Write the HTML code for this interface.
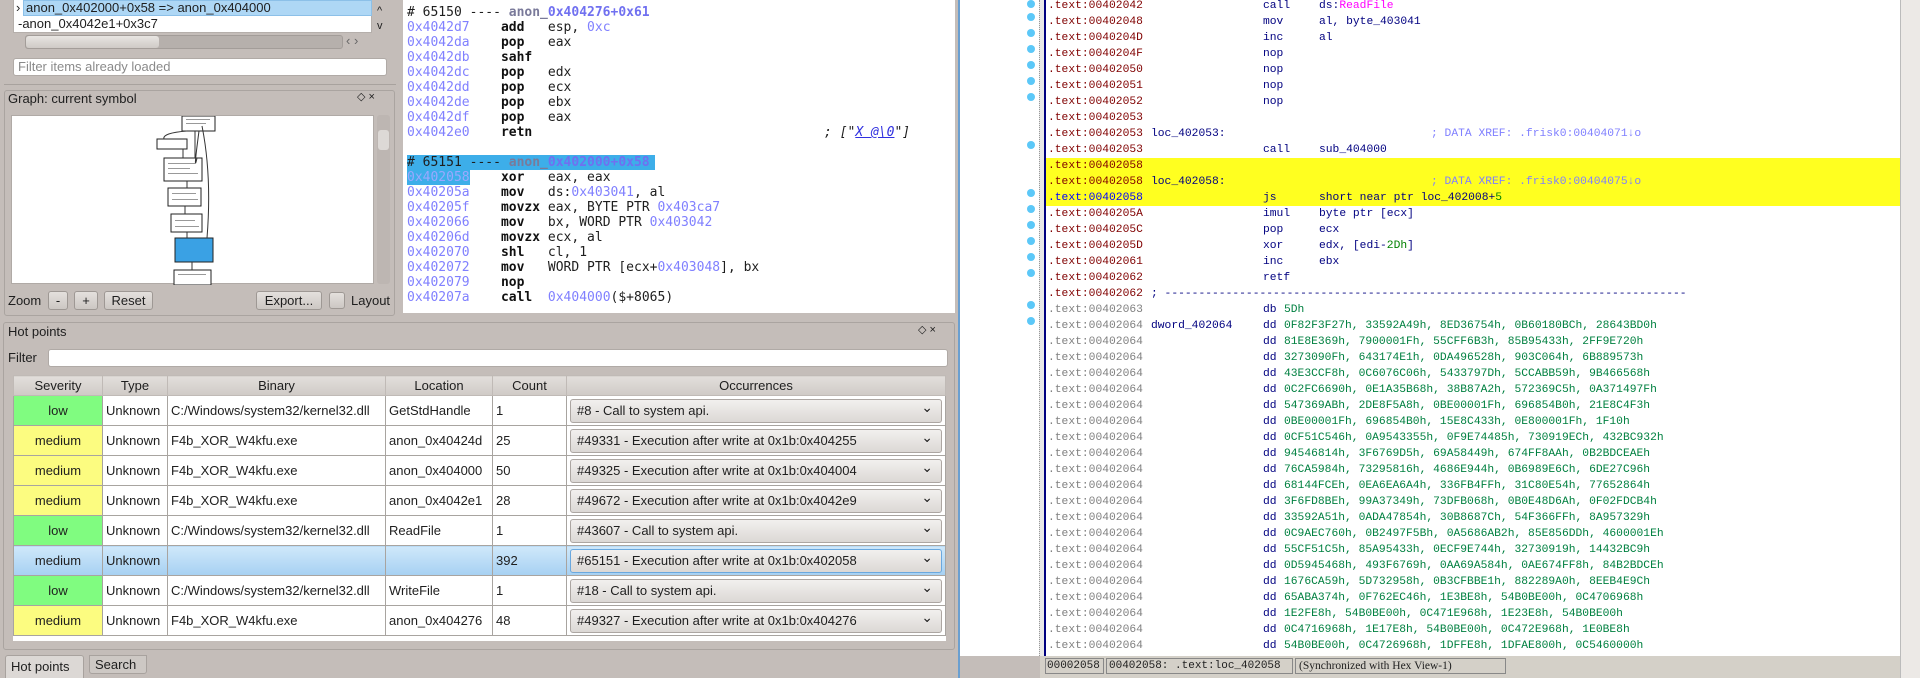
<!DOCTYPE html>
<html><head><meta charset="utf-8"><style>
*{margin:0;padding:0;box-sizing:border-box}
body{width:1920px;height:678px;overflow:hidden;background:#c4bdb9;font-family:"Liberation Sans","DejaVu Sans",sans-serif;font-size:13px;color:#1e1e1e;position:relative}
.a{position:absolute}
.w{background:#fff}
.btn{position:absolute;height:19px;border:1px solid #9e9894;border-radius:3px;background:linear-gradient(#e4e0dd,#ccc7c3);text-align:center;line-height:17px;font-size:13px}
.code{position:absolute;left:403px;top:0;width:552px;height:313px;background:#fff;font-family:"DejaVu Sans Mono","Liberation Mono",monospace;font-size:13px;overflow:hidden}
.code div{position:absolute;height:15px;line-height:15px;white-space:pre}
.ad{color:#8080ff}
.mn{font-weight:bold;color:#111}
.ida{position:absolute;left:960px;top:0;width:940px;height:656px;background:#fff;overflow:hidden;font-family:"Liberation Mono","DejaVu Sans Mono",monospace;font-size:11.3px}
.r{position:absolute;left:0;width:940px;height:16px;line-height:16px;white-space:pre}
.r span{position:absolute}
.t{left:88px;color:#800000}
.g{left:88px;color:#808080}
.lb{left:191px;color:#000080}
.m{left:303px;color:#000080}
.o{left:359px;color:#000080}
.d{left:324px;color:#008040}
.c{left:471px;color:#8080ff}
.dot{position:absolute;left:67px;width:8px;height:8px;border-radius:4px;background:#5cc8f8}
table{border-collapse:collapse;position:absolute;left:13px;top:375px;width:933px;table-layout:fixed;background:#fff}
td,th{border:1px solid #a8a4a0;height:30px;font-weight:normal;white-space:nowrap;overflow:hidden;padding:0 3px;font-size:13px}
th{height:20px;background:linear-gradient(#e2dedb,#cfcac6);border-color:#c0bab6}
.lo{background:#80fc80;text-align:center}
.me{background:#fcfc80;text-align:center}
.sel td{background:linear-gradient(#cfe8fa,#a6d0f2)}
.cb{height:24px;border:1px solid #aca6a2;border-radius:3px;background:linear-gradient(#f2f0ee,#dcd8d5);line-height:22px;padding-left:6px;position:relative}
.cb:after{content:"⌄";position:absolute;right:8px;top:-4px;font-size:14px}
</style></head><body>

<!-- top-left tree -->
<div class="a w" style="left:13px;top:0;width:359px;height:33px;border:1px solid #b5afab;border-top:none"></div>
<div class="a" style="left:23px;top:0;width:349px;height:16px;background:#aed7f5;border:1px solid #8cc0e8"></div>
<div class="a" style="left:16px;top:0;line-height:16px">›</div>
<div class="a" style="left:26px;top:0;line-height:16px">anon_0x402000+0x58 =&gt; anon_0x404000</div>
<div class="a" style="left:18px;top:16px;line-height:15px">-anon_0x4042e1+0x3c7</div>
<div class="a" style="left:377px;top:5px;font-size:11px">^</div>
<div class="a" style="left:377px;top:20px;font-size:11px">v</div>
<div class="a" style="left:25px;top:35px;width:318px;height:14px;background:#b6b0ac;border-radius:3px;border:1px solid #a39d99"></div>
<div class="a" style="left:26px;top:36px;width:133px;height:12px;background:linear-gradient(#e8e5e2,#cfcac6);border-radius:3px"></div>
<div class="a" style="left:346px;top:33px;color:#666">‹ ›</div>
<div class="a w" style="left:13px;top:58px;width:374px;height:18px;border:1px solid #b0aaa6;border-radius:3px;color:#8a8a8a;padding-left:4px;line-height:16px">Filter items already loaded</div>
<div class="a" style="left:4px;top:84px;width:392px;height:1px;background:#a8a29e"></div>

<!-- graph dock -->
<div class="a" style="left:4px;top:90px;width:391px;height:226px;border:1px solid #aaa4a0;border-radius:3px"></div>
<div class="a" style="left:8px;top:91px;font-size:13px">Graph: current symbol</div>
<div class="a" style="left:357px;top:90px;font-size:11px">◇ ×</div>
<div class="a w" style="left:11px;top:115px;width:363px;height:169px;border:1px solid #b0aaa6">
 <svg width="363" height="169" style="position:absolute;left:0;top:0">
  <g fill="#fff" stroke="#222" stroke-width="1">
   <rect x="170" y="0" width="33" height="15"/>
   <rect x="145" y="23" width="30" height="10"/>
   <rect x="152" y="42" width="38" height="23"/>
   <rect x="156" y="72" width="33" height="18"/>
   <rect x="159" y="98" width="31" height="18"/>
   <rect x="163" y="122" width="38" height="24" fill="#3aa1e4"/>
   <rect x="162" y="154" width="37" height="15"/>
  </g>
  <g fill="none" stroke="#333">
   <path d="M183 15 L183 42 M171 33 L171 42 M175 65 L175 72 M173 90 L173 98 M175 116 L175 122 M180 146 L180 154 M190 10 Q200 60 195 122 M187 15 Q181 60 185 42 M175 15 Q150 17 152 23"/>
  </g>
  <g fill="#999"><rect x="174" y="3" width="24" height="1"/><rect x="174" y="7" width="20" height="1"/><rect x="156" y="47" width="28" height="1"/><rect x="156" y="52" width="22" height="1"/><rect x="156" y="57" width="30" height="1"/><rect x="160" y="77" width="24" height="1"/><rect x="160" y="83" width="26" height="1"/><rect x="163" y="104" width="20" height="1"/><rect x="163" y="110" width="24" height="1"/><rect x="166" y="158" width="28" height="1"/></g>
 </svg>
</div>
<div class="a" style="left:377px;top:115px;width:13px;height:169px;background:#bdb6b2;border-radius:3px"></div>
<div class="a" style="left:378px;top:130px;width:11px;height:20px;background:#ddd9d6;border-radius:3px"></div>
<div class="a" style="left:8px;top:292px;line-height:17px">Zoom</div>
<div class="btn" style="left:48px;top:291px;width:20px">-</div>
<div class="btn" style="left:74px;top:291px;width:24px">+</div>
<div class="btn" style="left:104px;top:291px;width:49px">Reset</div>
<div class="btn" style="left:256px;top:291px;width:66px">Export...</div>
<div class="btn" style="left:329px;top:292px;width:16px;height:17px"></div>
<div class="a" style="left:351px;top:292px;line-height:17px">Layout</div>

<!-- code panel -->
<div class="code">
 <div style="left:4px;top:5px"># 65150 ---- <b style="color:#7a7a9a">anon_</b><b style="color:#7070f0">0x404276+0x61</b></div>
 <div style="left:4px;top:20px"><span class="ad">0x4042d7</span>    <span class="mn">add</span>   esp, <span class="ad">0xc</span></div>
 <div style="left:4px;top:35px"><span class="ad">0x4042da</span>    <span class="mn">pop</span>   eax</div>
 <div style="left:4px;top:50px"><span class="ad">0x4042db</span>    <span class="mn">sahf</span></div>
 <div style="left:4px;top:65px"><span class="ad">0x4042dc</span>    <span class="mn">pop</span>   edx</div>
 <div style="left:4px;top:80px"><span class="ad">0x4042dd</span>    <span class="mn">pop</span>   ecx</div>
 <div style="left:4px;top:95px"><span class="ad">0x4042de</span>    <span class="mn">pop</span>   ebx</div>
 <div style="left:4px;top:110px"><span class="ad">0x4042df</span>    <span class="mn">pop</span>   eax</div>
 <div style="left:4px;top:125px"><span class="ad">0x4042e0</span>    <span class="mn">retn</span></div>
 <div style="left:421px;top:125px;font-style:italic">; ["<span style="color:#3030e0;text-decoration:underline">X @\0</span>"]</div>
 <div style="left:4px;top:155px;background:#3daee9;width:248px"># 65151 ---- <b style="color:#7a7a9a">anon_</b><b style="color:#7070f0">0x402000+0x58</b></div>
 <div style="left:4px;top:170px"><span style="background:#3daee9;color:#9aa8ff">0x402058</span>    <span class="mn">xor</span>   eax, eax</div>
 <div style="left:4px;top:185px"><span class="ad">0x40205a</span>    <span class="mn">mov</span>   ds:<span class="ad">0x403041</span>, al</div>
 <div style="left:4px;top:200px"><span class="ad">0x40205f</span>    <span class="mn">movzx</span> eax, BYTE PTR <span class="ad">0x403ca7</span></div>
 <div style="left:4px;top:215px"><span class="ad">0x402066</span>    <span class="mn">mov</span>   bx, WORD PTR <span class="ad">0x403042</span></div>
 <div style="left:4px;top:230px"><span class="ad">0x40206d</span>    <span class="mn">movzx</span> ecx, al</div>
 <div style="left:4px;top:245px"><span class="ad">0x402070</span>    <span class="mn">shl</span>   cl, 1</div>
 <div style="left:4px;top:260px"><span class="ad">0x402072</span>    <span class="mn">mov</span>   WORD PTR [ecx+<span class="ad">0x403048</span>], bx</div>
 <div style="left:4px;top:275px"><span class="ad">0x402079</span>    <span class="mn">nop</span></div>
 <div style="left:4px;top:290px"><span class="ad">0x40207a</span>    <span class="mn">call</span>  <span class="ad">0x404000</span>($+8065)</div>
</div>

<!-- hot points dock -->
<div class="a" style="left:3px;top:322px;width:952px;height:328px;border:1px solid #aaa4a0;border-radius:3px"></div>
<div class="a" style="left:8px;top:324px;line-height:15px">Hot points</div>
<div class="a" style="left:918px;top:323px;font-size:11px">◇ ×</div>
<div class="a" style="left:8px;top:350px;line-height:15px">Filter</div>
<div class="a w" style="left:48px;top:349px;width:900px;height:18px;border:1px solid #b0aaa6;border-radius:3px"></div>
<div class="a w" style="left:13px;top:375px;width:933px;height:266px"></div>
<table>
<colgroup><col style="width:89px"><col style="width:65px"><col style="width:218px"><col style="width:107px"><col style="width:74px"><col></colgroup>
<tr><th>Severity</th><th>Type</th><th>Binary</th><th>Location</th><th>Count</th><th>Occurrences</th></tr>
<tr><td class="lo">low</td><td>Unknown</td><td>C:/Windows/system32/kernel32.dll</td><td>GetStdHandle</td><td>1</td><td><div class="cb">#8 - Call to system api.</div></td></tr>
<tr><td class="me">medium</td><td>Unknown</td><td>F4b_XOR_W4kfu.exe</td><td>anon_0x40424d</td><td>25</td><td><div class="cb">#49331 - Execution after write at 0x1b:0x404255</div></td></tr>
<tr><td class="me">medium</td><td>Unknown</td><td>F4b_XOR_W4kfu.exe</td><td>anon_0x404000</td><td>50</td><td><div class="cb">#49325 - Execution after write at 0x1b:0x404004</div></td></tr>
<tr><td class="me">medium</td><td>Unknown</td><td>F4b_XOR_W4kfu.exe</td><td>anon_0x4042e1</td><td>28</td><td><div class="cb">#49672 - Execution after write at 0x1b:0x4042e9</div></td></tr>
<tr><td class="lo">low</td><td>Unknown</td><td>C:/Windows/system32/kernel32.dll</td><td>ReadFile</td><td>1</td><td><div class="cb">#43607 - Call to system api.</div></td></tr>
<tr class="sel"><td style="text-align:center">medium</td><td>Unknown</td><td></td><td></td><td>392</td><td><div class="cb" style="border-color:#6aa8de">#65151 - Execution after write at 0x1b:0x402058</div></td></tr>
<tr><td class="lo">low</td><td>Unknown</td><td>C:/Windows/system32/kernel32.dll</td><td>WriteFile</td><td>1</td><td><div class="cb">#18 - Call to system api.</div></td></tr>
<tr><td class="me">medium</td><td>Unknown</td><td>F4b_XOR_W4kfu.exe</td><td>anon_0x404276</td><td>48</td><td><div class="cb">#49327 - Execution after write at 0x1b:0x404276</div></td></tr>
</table>
<!-- tabs -->
<div class="a" style="left:5px;top:655px;width:79px;height:23px;background:#dcd8d5;border:1px solid #a8a29e;border-bottom:none;border-radius:3px 3px 0 0;line-height:22px;padding-left:5px">Hot points</div>
<div class="a" style="left:89px;top:655px;width:58px;height:19px;background:#cdc8c4;border:1px solid #a8a29e;border-radius:0 0 3px 3px;line-height:17px;padding-left:5px">Search</div>

<!-- divider -->
<div class="a" style="left:958px;top:0;width:2px;height:678px;background:#6a9fd0"></div>

<!-- IDA view -->
<div class="ida">
 <div class="a" style="left:79px;top:0;width:5px;height:656px;background:#e8e8e8;border-left:1px dotted #999"></div>
 <div class="a" style="left:84px;top:0;width:2px;height:656px;background:#000080"></div>
 <div class="a" style="left:86px;top:158px;width:854px;height:48px;background:#ffff20"></div>
 <div class="dot" style="top:0px"></div><div class="dot" style="top:13px"></div><div class="dot" style="top:29px"></div><div class="dot" style="top:45px"></div><div class="dot" style="top:61px"></div><div class="dot" style="top:77px"></div><div class="dot" style="top:93px"></div><div class="dot" style="top:141px"></div><div class="dot" style="top:189px"></div><div class="dot" style="top:205px"></div><div class="dot" style="top:221px"></div><div class="dot" style="top:237px"></div><div class="dot" style="top:253px"></div><div class="dot" style="top:269px"></div><div class="dot" style="top:301px"></div><div class="dot" style="top:317px"></div>
 <div class="r" style="top:-2px"><span class="t">.text:00402042</span><span class="m">call</span><span class="o">ds:<span style="position:static;color:#ff00ff">ReadFile</span></span></div>
 <div class="r" style="top:14px"><span class="t">.text:00402048</span><span class="m">mov</span><span class="o">al, byte_403041</span></div>
 <div class="r" style="top:30px"><span class="t">.text:0040204D</span><span class="m">inc</span><span class="o">al</span></div>
 <div class="r" style="top:46px"><span class="t">.text:0040204F</span><span class="m">nop</span></div>
 <div class="r" style="top:62px"><span class="t">.text:00402050</span><span class="m">nop</span></div>
 <div class="r" style="top:78px"><span class="t">.text:00402051</span><span class="m">nop</span></div>
 <div class="r" style="top:94px"><span class="t">.text:00402052</span><span class="m">nop</span></div>
 <div class="r" style="top:110px"><span class="t">.text:00402053</span></div>
 <div class="r" style="top:126px"><span class="t">.text:00402053</span><span class="lb">loc_402053:</span><span class="c">; DATA XREF: .frisk0:00404071↓o</span></div>
 <div class="r" style="top:142px"><span class="t">.text:00402053</span><span class="m">call</span><span class="o">sub_404000</span></div>
 <div class="r" style="top:158px"><span class="t">.text:00402058</span></div>
 <div class="r" style="top:174px"><span class="t">.text:00402058</span><span class="lb">loc_402058:</span><span class="c">; DATA XREF: .frisk0:00404075↓o</span></div>
 <div class="r" style="top:190px"><span class="t" style="color:#0000ff">.text:00402058</span><span class="m">js</span><span class="o">short near ptr loc_402008+<span style="position:static;color:#008000">5</span></span></div>
 <div class="r" style="top:206px"><span class="t">.text:0040205A</span><span class="m">imul</span><span class="o">byte ptr [ecx]</span></div>
 <div class="r" style="top:222px"><span class="t">.text:0040205C</span><span class="m">pop</span><span class="o">ecx</span></div>
 <div class="r" style="top:238px"><span class="t">.text:0040205D</span><span class="m">xor</span><span class="o">edx, [edi-<span style="position:static;color:#008000">2Dh</span>]</span></div>
 <div class="r" style="top:254px"><span class="t">.text:00402061</span><span class="m">inc</span><span class="o">ebx</span></div>
 <div class="r" style="top:270px"><span class="t">.text:00402062</span><span class="m">retf</span></div>
 <div class="r" style="top:286px"><span class="t">.text:00402062</span><span class="lb" style="color:#000080">; -----------------------------------------------------------------------------</span></div>
 <div class="r" style="top:302px"><span class="g">.text:00402063</span><span class="m">db</span><span class="d">5Dh</span></div>
 <div class="r" style="top:318px"><span class="g">.text:00402064</span><span class="lb">dword_402064</span><span class="m">dd</span><span class="d">0F82F3F27h, 33592A49h, 8ED36754h, 0B60180BCh, 28643BD0h</span></div>
 <div class="r" style="top:334px"><span class="g">.text:00402064</span><span class="m">dd</span><span class="d">81E8E369h, 7900001Fh, 55CFF6B3h, 85B95433h, 2FF9E720h</span></div>
 <div class="r" style="top:350px"><span class="g">.text:00402064</span><span class="m">dd</span><span class="d">3273090Fh, 643174E1h, 0DA496528h, 903C064h, 6B889573h</span></div>
 <div class="r" style="top:366px"><span class="g">.text:00402064</span><span class="m">dd</span><span class="d">43E3CCF8h, 0C6076C06h, 5433797Dh, 5CCABB59h, 9B466568h</span></div>
 <div class="r" style="top:382px"><span class="g">.text:00402064</span><span class="m">dd</span><span class="d">0C2FC6690h, 0E1A35B68h, 38B87A2h, 572369C5h, 0A371497Fh</span></div>
 <div class="r" style="top:398px"><span class="g">.text:00402064</span><span class="m">dd</span><span class="d">547369ABh, 2DE8F5A8h, 0BE00001Fh, 696854B0h, 21E8C4F3h</span></div>
 <div class="r" style="top:414px"><span class="g">.text:00402064</span><span class="m">dd</span><span class="d">0BE00001Fh, 696854B0h, 15E8C433h, 0E800001Fh, 1F10h</span></div>
 <div class="r" style="top:430px"><span class="g">.text:00402064</span><span class="m">dd</span><span class="d">0CF51C546h, 0A9543355h, 0F9E74485h, 730919ECh, 432BC932h</span></div>
 <div class="r" style="top:446px"><span class="g">.text:00402064</span><span class="m">dd</span><span class="d">94546814h, 3F6769D5h, 69A58449h, 674FF8AAh, 0B2BDCEAEh</span></div>
 <div class="r" style="top:462px"><span class="g">.text:00402064</span><span class="m">dd</span><span class="d">76CA5984h, 73295816h, 4686E944h, 0B6989E6Ch, 6DE27C96h</span></div>
 <div class="r" style="top:478px"><span class="g">.text:00402064</span><span class="m">dd</span><span class="d">68144FCEh, 0EA6EA6A4h, 336FB4FFh, 31C80E54h, 77652864h</span></div>
 <div class="r" style="top:494px"><span class="g">.text:00402064</span><span class="m">dd</span><span class="d">3F6FD8BEh, 99A37349h, 73DFB068h, 0B0E48D6Ah, 0F02FDCB4h</span></div>
 <div class="r" style="top:510px"><span class="g">.text:00402064</span><span class="m">dd</span><span class="d">33592A51h, 0ADA47854h, 30B8687Ch, 54F366FFh, 8A957329h</span></div>
 <div class="r" style="top:526px"><span class="g">.text:00402064</span><span class="m">dd</span><span class="d">0C9AEC760h, 0B2497F5Bh, 0A5686AB2h, 85E856DDh, 4600001Eh</span></div>
 <div class="r" style="top:542px"><span class="g">.text:00402064</span><span class="m">dd</span><span class="d">55CF51C5h, 85A95433h, 0ECF9E744h, 32730919h, 14432BC9h</span></div>
 <div class="r" style="top:558px"><span class="g">.text:00402064</span><span class="m">dd</span><span class="d">0D5945468h, 493F6769h, 0AA69A584h, 0AE674FF8h, 84B2BDCEh</span></div>
 <div class="r" style="top:574px"><span class="g">.text:00402064</span><span class="m">dd</span><span class="d">1676CA59h, 5D732958h, 0B3CFBBE1h, 882289A0h, 8EEB4E9Ch</span></div>
 <div class="r" style="top:590px"><span class="g">.text:00402064</span><span class="m">dd</span><span class="d">65ABA374h, 0F762EC46h, 1E3BE8h, 54B0BE00h, 0C4706968h</span></div>
 <div class="r" style="top:606px"><span class="g">.text:00402064</span><span class="m">dd</span><span class="d">1E2FE8h, 54B0BE00h, 0C471E968h, 1E23E8h, 54B0BE00h</span></div>
 <div class="r" style="top:622px"><span class="g">.text:00402064</span><span class="m">dd</span><span class="d">0C4716968h, 1E17E8h, 54B0BE00h, 0C472E968h, 1E0BE8h</span></div>
 <div class="r" style="top:638px"><span class="g">.text:00402064</span><span class="m">dd</span><span class="d">54B0BE00h, 0C4726968h, 1DFFE8h, 1DFAE800h, 0C5460000h</span></div>
</div>
<div class="a" style="left:1900px;top:0;width:20px;height:678px;background:#ece9e6;border-left:1px solid #bbb"></div>
<!-- status bar -->
<div class="a" style="left:1040px;top:656px;width:860px;height:22px;background:#d4d0c8"></div>
<div class="a" style="top:658px;left:1045px;width:59px;height:16px;border:1px solid #888;font-family:'Liberation Mono',monospace;font-size:11px;line-height:14px;padding-left:1px">00002058</div>
<div class="a" style="top:658px;left:1106px;width:187px;height:16px;border:1px solid #888;font-family:'Liberation Mono',monospace;font-size:11px;line-height:14px;padding-left:2px;white-space:pre">00402058: .text:loc_402058</div>
<div class="a" style="top:658px;left:1295px;width:211px;height:16px;border:1px solid #888;font-family:'Liberation Serif','DejaVu Serif',serif;font-size:11.5px;line-height:14px;padding-left:3px">(Synchronized with Hex View-1)</div>
</body></html>
